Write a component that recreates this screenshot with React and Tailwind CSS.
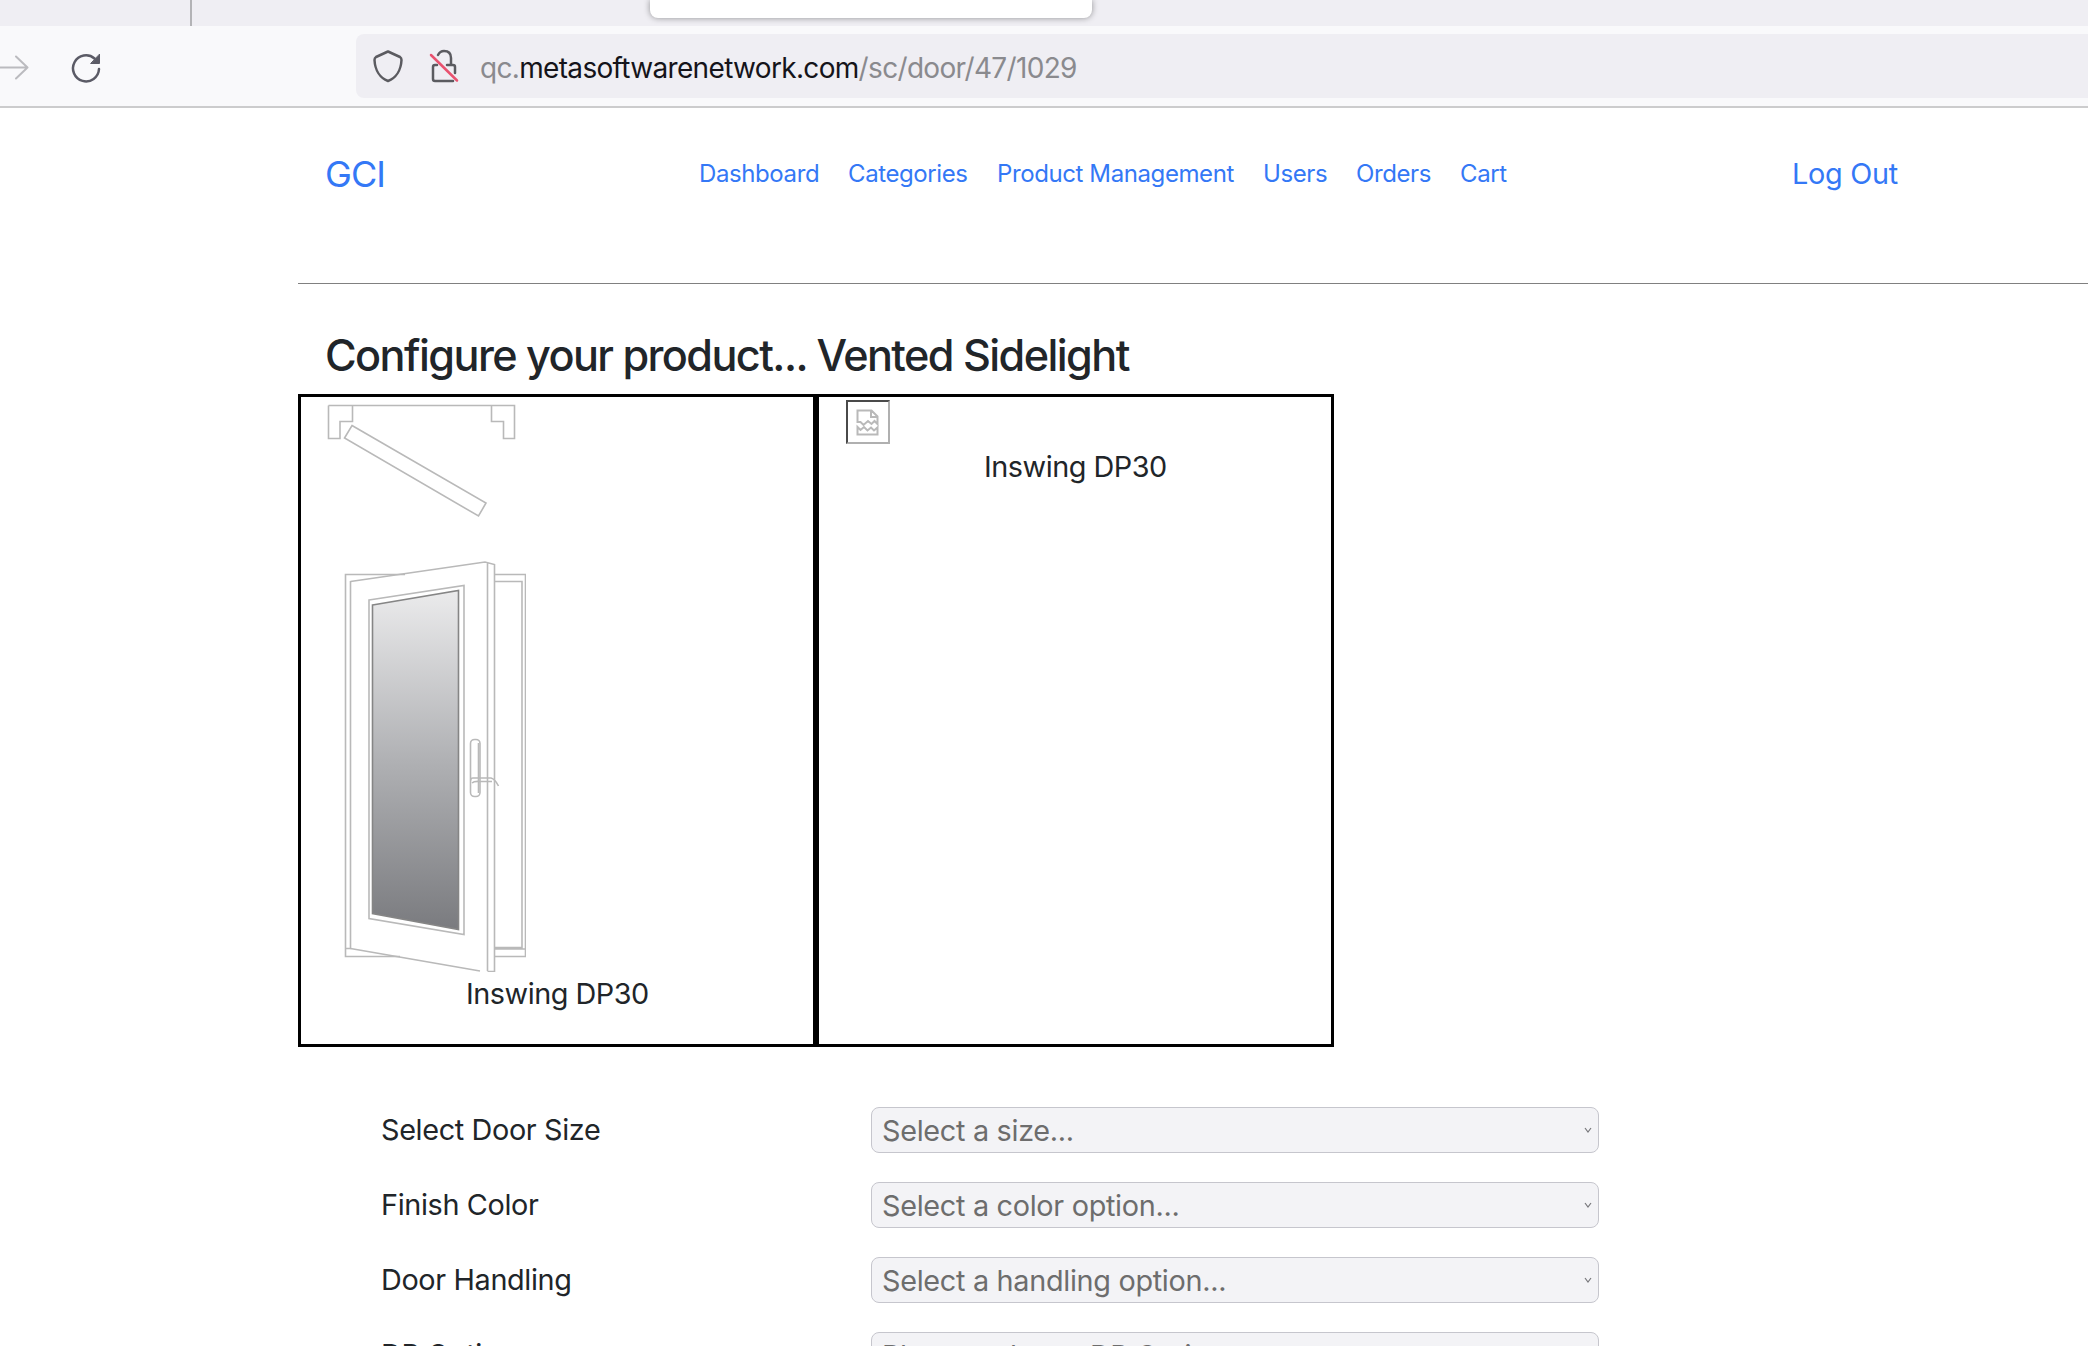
const Glyphs = () => (
  <svg className="block" width="200" height="568" viewBox="326 404 200 568" fill="none" stroke="#b9b9b9" strokeWidth="1.6">
    <defs>
      <linearGradient id="glass" x1="0" y1="0" x2="0" y2="1">
        <stop offset="0" stopColor="#ebebec" />
        <stop offset="0.5" stopColor="#b0b1b4" />
        <stop offset="1" stopColor="#7a7b7f" />
      </linearGradient>
    </defs>
    <path d="M328.5 405.5H514.5V438.5H503.500V421.500H491.500V405.500M352.500 405.500V421.500H340V438.500H328.500V405.500" />
    <path d="M352 425.500L486 503L478.500 516L344.500 438Z" />
    <path d="M405 574.500H345.500V956.500H400M350.500 581V948.500H345.500M494.500 574.500H525.500V956.500H494.500M494.500 581.500H522V947.500H494.500M494.500 949H525.500" />
    <path d="M350.500 581.500L485 562L494.500 564.500V971.500H487.500M350.500 948.500L480 971M487.500 562V971" />
    <path d="M369 600L464 585.500V934.500L369 918.500Z" />
    <path d="M372.500 605L458.500 590.500V929.500L372.500 913.500Z" fill="url(#glass)" stroke="#858585" />
    <rect x="470.500" y="739.500" width="9.500" height="57" rx="4" />
    <path d="M478.500 743V793" />
    <path d="M471 780.500Q470 777.500 474 778H491Q495 779 498.500 786M472 783Q474 781 480 781.500H492" />
  </svg>
);

const BrokenImage = () => (
  <div className="h-11 w-11 border-2 border-t-[#4a4a4a] border-l-[#4a4a4a] border-r-[#b0b0b0] border-b-[#b0b0b0]">
    <svg className="block" width="40" height="40" viewBox="848 402 40 40" fill="none" stroke="#b9b9b9" strokeWidth="2">
      <path d="M857.500 422V410.500H871.500L877.500 416.500V424L874.500 421L871.500 424L868 421L863.500 425L860.500 422ZM871 410.500V417H877.500" />
      <path d="M857.500 434.500V427L860.500 430L864 427L867.500 430.500L871 427.500L874 430.500L877.500 427.500V434.500Z" />
    </svg>
  </div>
);

const rows = [
  ["Select Door Size", "Select a size..."],
  ["Finish Color", "Select a color option..."],
  ["Door Handling", "Select a handling option..."],
  ["DP Option", "Please select a DP Option..."],
];

export default function App() {
  return (
    <div className="h-[1346px] w-[2088px] overflow-hidden bg-white font-['Inter',sans-serif] text-[#212529]">
      <div className="flex h-[26px] bg-[#efeef3]">
        <div className="w-[192px] border-r-2 border-[#b3b3b6]" />
        <div className="ml-[458px] h-[18px] w-[442px] rounded-b-lg bg-white shadow-[0_0_6px_rgba(0,0,0,0.4)]" />
      </div>
      <div className="flex h-[82px] items-center border-b-2 border-[#cccccd] bg-[#f9f9fb]">
        <svg width="110" height="80" viewBox="0 26 110 80" fill="none" strokeWidth="2" strokeLinecap="round" strokeLinejoin="round">
          <path d="M-2 67.500H27.500M16 56.500L27.500 67.500L16 78.500" stroke="#bbbbbf" />
          <path d="M99 69A13 13 0 1 1 94.500 58.500" stroke="#5b5b66" strokeWidth="2.500" />
          <path d="M99.500 54.500V63.500H91Z" fill="#5b5b66" stroke="#5b5b66" strokeWidth="1" />
        </svg>
        <div className="ml-[246px] flex h-16 flex-1 items-center rounded-l-lg bg-[#efeef3]">
          <svg width="124" height="64" viewBox="356 34 124 64" fill="none" stroke="#5b5b60" strokeWidth="2.500" strokeLinecap="round" strokeLinejoin="round">
            <path d="M388 51.500L400 57Q401.500 58 401.500 60C401 70 396 78 388 81C380 78 375 70 374.500 60Q374.500 58 376 57Z" />
            <path d="M438 55Q440 51 444 51Q451 51 451 58V65M437 65H435Q433 65 433 67V79Q433 81 435 81H453M447 65H453Q455 65 455 67V73" />
            <path d="M431 55L457 80.500" stroke="#e9526f" />
          </svg>
          <div className="pt-[3px] text-[28px] tracking-[-0.67px] text-[#8a8a8e]">
            qc.<span className="text-[#15141a]">metasoftwarenetwork.com</span>/sc/door/47/1029
          </div>
        </div>
      </div>
      <div className="ml-[298px]">
        <header className="flex h-[175px] items-start text-[#3478f6]">
          <div className="ml-[27px] mt-[39px] w-[374px] text-[36px] leading-[54px] tracking-[-0.9px]">GCI</div>
          <nav className="mt-[48px] flex w-[1093px] text-[24px] leading-9 tracking-[-0.4px]">
            <span className="w-[149px]">Dashboard</span>
            <span className="w-[149px]">Categories</span>
            <span className="w-[266px]">Product Management</span>
            <span className="w-[93px]">Users</span>
            <span className="w-[104px]">Orders</span>
            <span>Cart</span>
          </nav>
          <div className="mt-[44px] text-[28.8px] leading-[43px] tracking-[-0.25px]">Log Out</div>
        </header>
        <hr className="border-t border-[#808080]" />
        <h1 className="ml-[27px] mt-[44px] h-[66px] text-[43.2px] leading-[54px] font-medium tracking-[-1.57px] whitespace-nowrap">
          Configure your product... Vented Sidelight
        </h1>
        <div className="flex h-[653px] text-[28.8px] leading-[43px] tracking-[-0.47px]">
          <div className="w-[518px] border-[3px] border-black pl-[25px] pt-[7px]">
            <Glyphs />
            <div className="ml-[140px]">Inswing DP30</div>
          </div>
          <div className="w-[518px] border-[3px] border-black pl-[27px] pt-[3px]">
            <BrokenImage />
            <div className="ml-[138px] mt-[1px]">Inswing DP30</div>
          </div>
        </div>
        <div className="mt-[60px] ml-[83px] text-[28.8px]">
          {rows.map(([label, option]) => (
            <div key={label} className="flex h-[75px] items-start">
              <div className="w-[490px] leading-[46px] tracking-[-0.35px] whitespace-nowrap">{label}</div>
              <div className="flex h-[46px] w-[728px] items-center justify-between rounded-lg border border-[#c6c6cd] bg-[#f3f3f6] pr-[6px] pl-[10px] text-[#6d6d6d]">
                <span className="pt-px leading-[44px] tracking-[-0.3px] whitespace-nowrap">{option}</span>
                <svg width="8" height="8" viewBox="0 0 8 8" fill="none" stroke="#77777b" strokeWidth="1.200">
                  <path d="M1 2L4 6L7 2" />
                </svg>
              </div>
            </div>
          ))}
        </div>
      </div>
    </div>
  );
}
